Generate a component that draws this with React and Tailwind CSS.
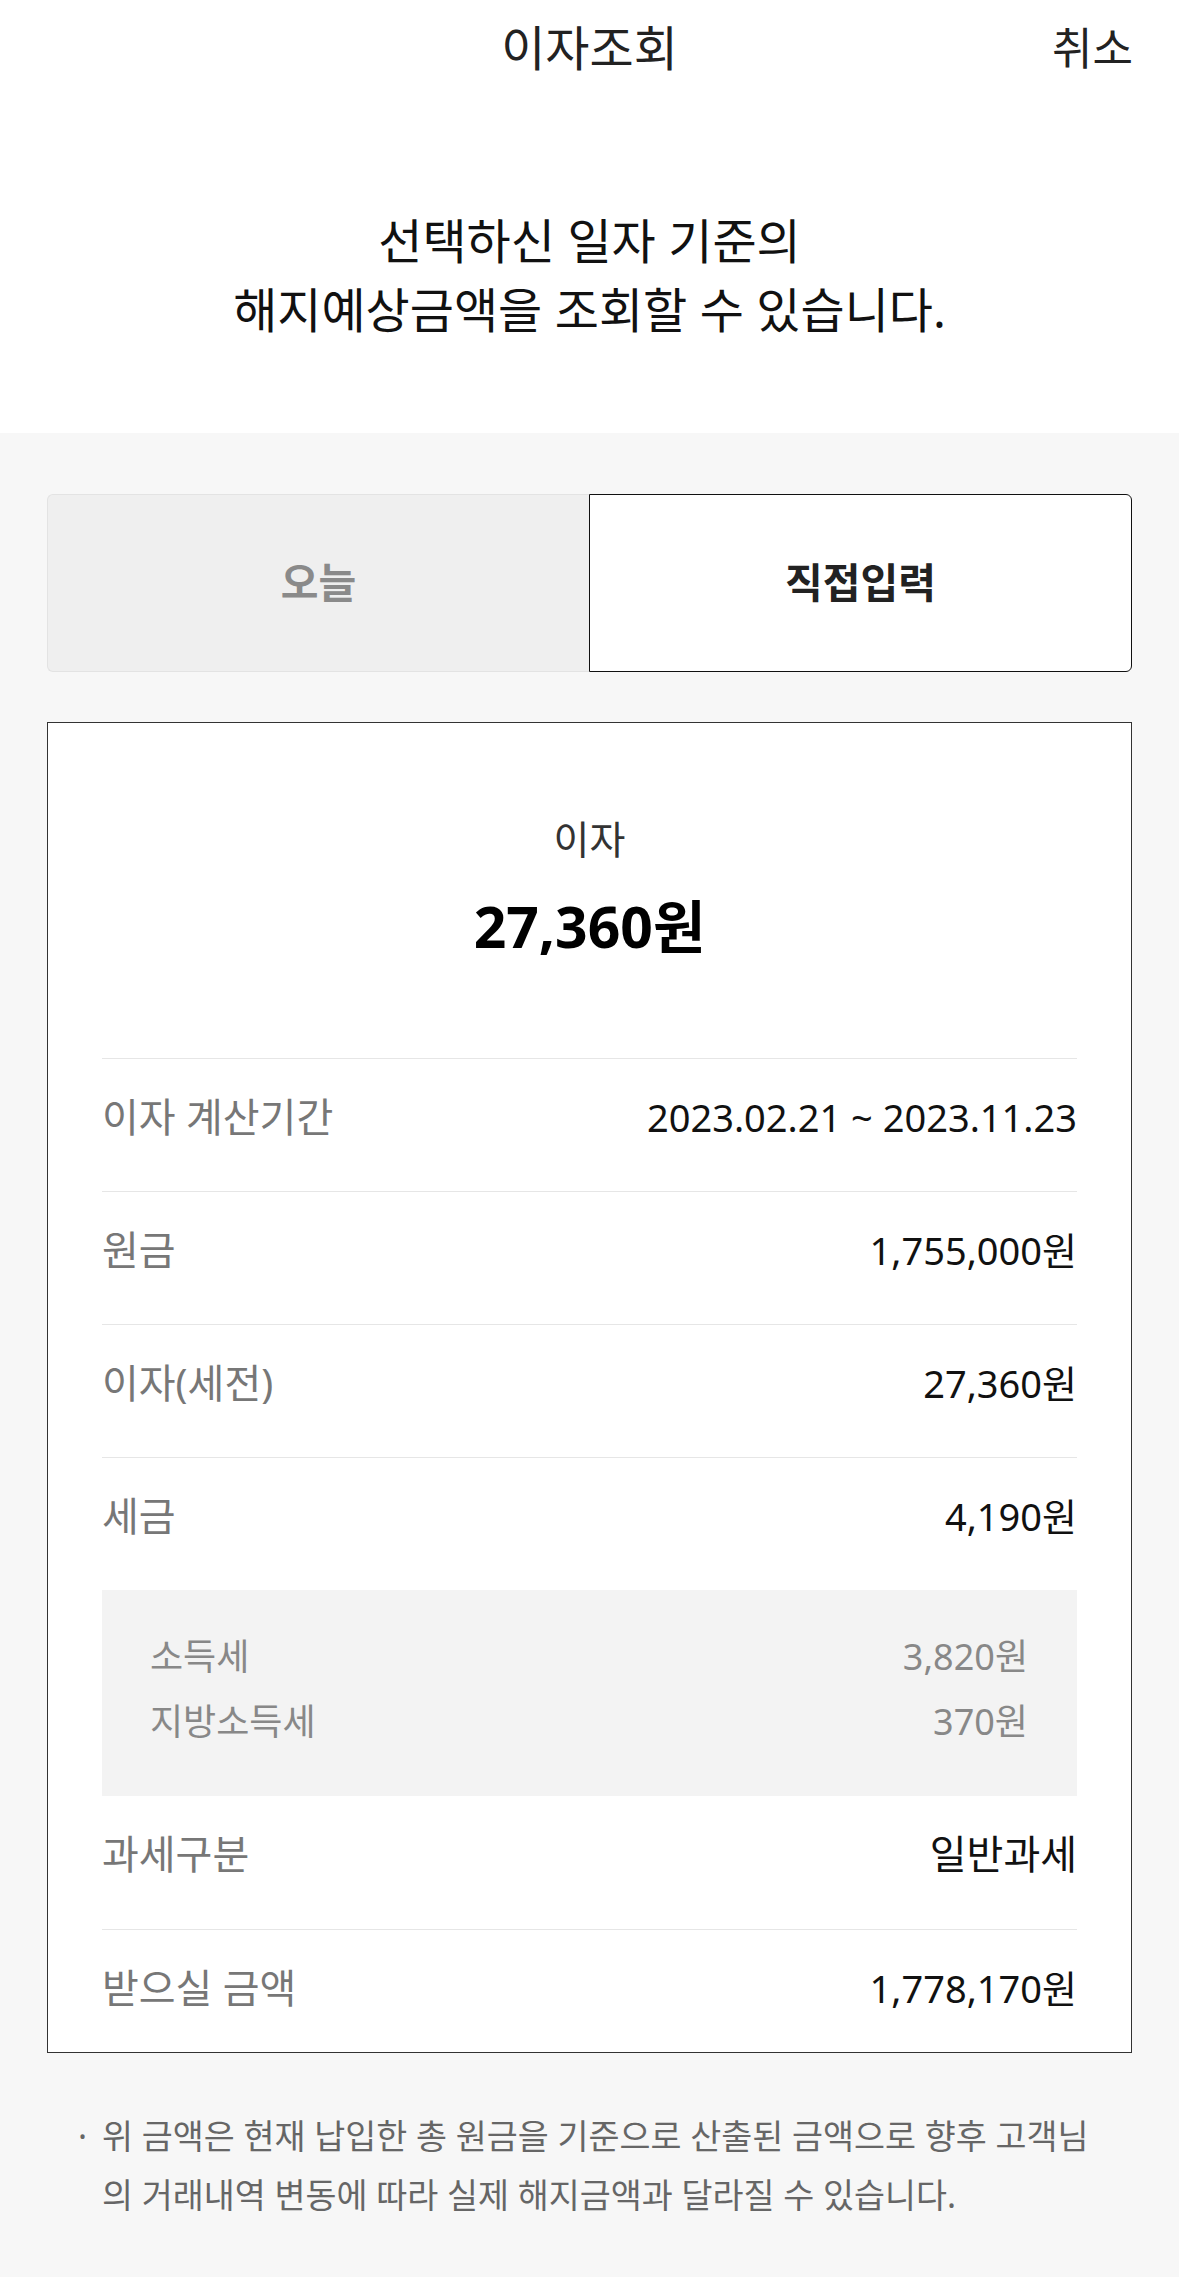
import React from "react";

const rows1 = [
  { label: "이자 계산기간", value: "2023.02.21 ~ 2023.11.23" },
  { label: "원금", value: "1,755,000원" },
  { label: "이자(세전)", value: "27,360원" },
];

function Row({ label, value }) {
  return (
    <div className="flex items-center justify-between pt-[33px] pb-[49px] leading-[50px]">
      <span className="text-[40px] text-[#777777]">{label}</span>
      <span className="text-[38px] text-[#111111]">{value}</span>
    </div>
  );
}

export default function App() {
  return (
    <div
      className="w-[1179px] min-h-[2277px] bg-[#f7f7f7]"
      style={{ fontFamily: '"Noto Sans", "Noto Sans CJK KR", sans-serif' }}
    >
      {/* white top */}
      <div className="bg-white">
        <div className="grid h-[96px] grid-cols-[1fr_auto_1fr] items-center">
          <div />
          <div className="text-[48px] leading-[56px] text-[#222222]">이자조회</div>
          <div className="justify-self-end pr-[46px] text-[44px] leading-[56px] text-[#222222]">
            취소
          </div>
        </div>
        <div className="pt-[110px] pb-[89px] text-center text-[48px] leading-[69px] text-[#111111]">
          선택하신 일자 기준의
          <br />
          해지예상금액을 조회할 수 있습니다.
        </div>
      </div>

      {/* gray section */}
      <div className="px-[47px] pt-[61px]">
        <div className="flex h-[178px]">
          <div className="flex flex-1 items-center justify-center rounded-l-[6px] border border-r-0 border-[#e3e3e3] bg-[#efefef] text-[41px] font-bold text-[#8a8a8a]">
            오늘
          </div>
          <div className="flex flex-1 items-center justify-center rounded-r-[6px] border border-[#111111] bg-white text-[41px] font-bold text-[#222222]">
            직접입력
          </div>
        </div>

        <div className="mt-[50px] border border-[#333333] bg-white px-[54px]">
          <div className="pt-[91px] text-center">
            <div className="text-[39px] leading-[50px] text-[#333333]">이자</div>
            <div className="mt-[27px] text-[57px] font-bold leading-[70px] text-black">
              27,360원
            </div>
          </div>
          <div className="mt-[97px]">
            {rows1.map((r) => (
              <div key={r.label} className="border-t border-[#e6e6e6]">
                <Row label={r.label} value={r.value} />
              </div>
            ))}
            <div className="border-t border-[#e6e6e6]">
              <Row label="세금" value="4,190원" />
            </div>
            <div className="flex flex-col gap-[19px] bg-[#f3f3f3] pl-[48px] pr-[49px] pt-[44px] pb-[51px] text-[36px] leading-[46px] text-[#888888]">
              <div className="flex justify-between">
                <span>소득세</span>
                <span>3,820원</span>
              </div>
              <div className="flex justify-between">
                <span>지방소득세</span>
                <span>370원</span>
              </div>
            </div>
            <div className="flex items-center justify-between pt-[33px] pb-[50px] leading-[50px]">
              <span className="text-[40px] text-[#777777]">과세구분</span>
              <span className="text-[40px] text-[#111111]">일반과세</span>
            </div>
            <div className="flex items-center justify-between border-t border-[#e6e6e6] pt-[33px] pb-[39px] leading-[50px]">
              <span className="text-[40px] text-[#777777]">받으실 금액</span>
              <span className="text-[38px] text-[#111111]">1,778,170원</span>
            </div>
          </div>
        </div>
      </div>

      <div className="flex pl-[78px] pr-[10px] pt-[54px] pb-[52px] text-[33.7px] leading-[59px] text-[#666666]">
        <span className="w-[24px] shrink-0">·</span>
        <p className="whitespace-nowrap">
          위 금액은 현재 납입한 총 원금을 기준으로 산출된 금액으로 향후 고객님
          <br />
          의 거래내역 변동에 따라 실제 해지금액과 달라질 수 있습니다.
        </p>
      </div>
    </div>
  );
}
